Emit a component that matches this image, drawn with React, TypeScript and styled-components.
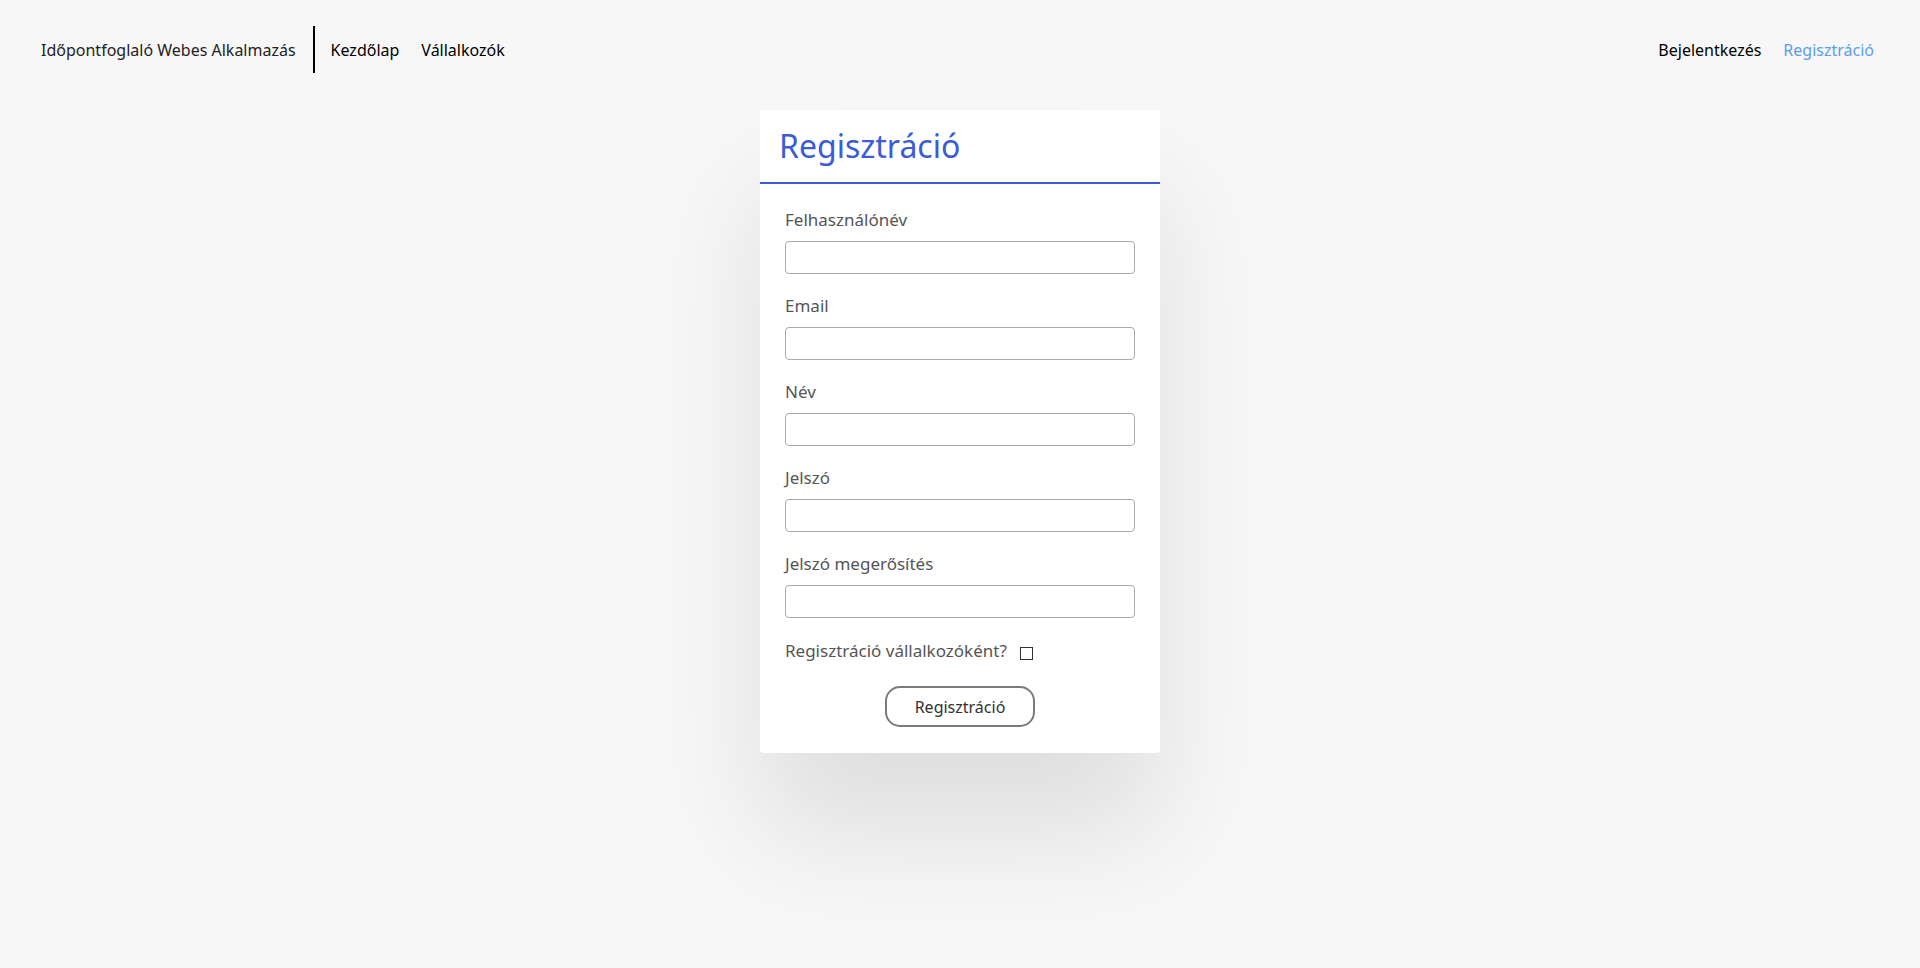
import React from "react";
import styled, { createGlobalStyle } from "styled-components";

const GlobalStyle = createGlobalStyle`
  html, body {
    margin: 0;
    padding: 0;
    background: #f7f7f7;
    font-family: "Noto Sans", "Open Sans", sans-serif;
    color: #222;
  }
  * { box-sizing: border-box; }
`;

const Page = styled.div`
  min-height: 100vh;
  display: flex;
  flex-direction: column;
`;

const Header = styled.header`
  height: 99px;
  display: flex;
  align-items: center;
  justify-content: space-between;
  padding: 0 46px 0 41px;
`;

const NavGroup = styled.nav`
  display: flex;
  align-items: center;
  gap: 22px;
  font-size: 16px;
`;

const Brand = styled.span`
  color: #222;
`;

const Divider = styled.span`
  width: 2px;
  height: 47px;
  background: #000;
  margin: 0 -6px 0 -5px;
`;

const NavLink = styled.a<{ $active?: boolean }>`
  color: ${(p) => (p.$active ? "#5b9ef0" : "#000")};
  text-decoration: none;
  cursor: pointer;
`;

const Main = styled.main`
  display: flex;
  justify-content: center;
  padding-top: 11px;
`;

const Card = styled.section`
  width: 400px;
  background: #fff;
  border-radius: 4px;
  box-shadow: 0 80px 120px rgba(0, 0, 0, 0.1);
`;

const CardHeader = styled.div`
  padding: 14px 19px 15px;
  border-bottom: 2px solid #3b5bdb;
`;

const Title = styled.h2`
  margin: 0;
  font-size: 32px;
  font-weight: 400;
  color: #3b5bdb;
`;

const Form = styled.form`
  padding: 24px 25px 26px;
  display: flex;
  flex-direction: column;
`;

const Field = styled.div`
  display: flex;
  flex-direction: column;
  margin-bottom: 20px;
`;

const Label = styled.label`
  font-size: 17px;
  color: #555;
  margin-bottom: 10px;
`;

const Input = styled.input`
  height: 33px;
  width: 100%;
  border: 1px solid #aaa;
  border-radius: 4px;
  background: #fff;
  font-family: inherit;
  font-size: 15px;
  padding: 0 8px;
  outline: none;
`;

const CheckRow = styled.div`
  display: flex;
  align-items: center;
  padding-top: 1px;
`;

const CheckLabel = styled.label`
  font-size: 17px;
  color: #555;
`;

const Check = styled.input`
  appearance: none;
  width: 13px;
  height: 13px;
  margin: 5px 0 0 13px;
  border: 1.5px solid #333;
  border-radius: 0;
  background: #fff;
`;

const Submit = styled.button`
  align-self: center;
  margin-top: 24px;
  width: 150px;
  height: 41px;
  border: 2px solid #7a7a7a;
  border-radius: 15px;
  background: #fff;
  font-family: inherit;
  font-size: 16px;
  color: #333;
  cursor: pointer;
`;

const fields = [
  { id: "username", label: "Felhasználónév", type: "text" },
  { id: "email", label: "Email", type: "email" },
  { id: "name", label: "Név", type: "text" },
  { id: "password", label: "Jelszó", type: "password" },
  { id: "password2", label: "Jelszó megerősítés", type: "password" },
];

export default function App() {
  return (
    <Page>
      <GlobalStyle />
      <Header>
        <NavGroup>
          <Brand>Időpontfoglaló Webes Alkalmazás</Brand>
          <Divider />
          <NavLink>Kezdőlap</NavLink>
          <NavLink>Vállalkozók</NavLink>
        </NavGroup>
        <NavGroup>
          <NavLink>Bejelentkezés</NavLink>
          <NavLink $active>Regisztráció</NavLink>
        </NavGroup>
      </Header>
      <Main>
        <Card>
          <CardHeader>
            <Title>Regisztráció</Title>
          </CardHeader>
          <Form onSubmit={(e) => e.preventDefault()}>
            {fields.map((f) => (
              <Field key={f.id}>
                <Label htmlFor={f.id}>{f.label}</Label>
                <Input id={f.id} type={f.type} />
              </Field>
            ))}
            <CheckRow>
              <CheckLabel htmlFor="business">Regisztráció vállalkozóként?</CheckLabel>
              <Check id="business" type="checkbox" />
            </CheckRow>
            <Submit type="submit">Regisztráció</Submit>
          </Form>
        </Card>
      </Main>
    </Page>
  );
}
